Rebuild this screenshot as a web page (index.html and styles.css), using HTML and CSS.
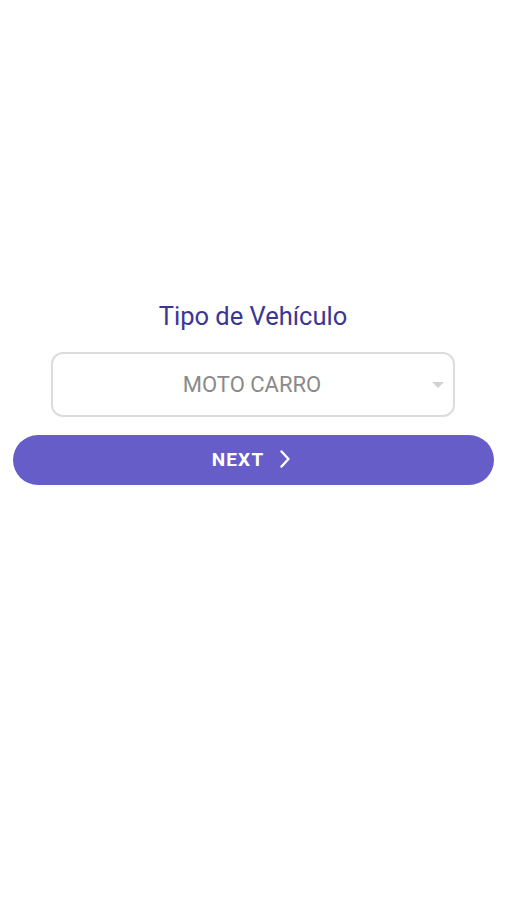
FILE: index.html
```html
<!DOCTYPE html>
<html lang="es">
<head>
<meta charset="utf-8">
<title>Tipo de Vehículo</title>
<link rel="stylesheet" href="styles.css">
</head>
<body>
<main class="page">
  <h1 class="title">Tipo de Vehículo</h1>
  <div class="select">
    <span class="select-value">MOTO CARRO</span>
    <span class="select-arrow"></span>
  </div>
  <button class="next" type="button">
    <span class="next-label">NEXT</span>
    <svg class="next-icon" width="14" height="22" viewBox="0 0 14 22" aria-hidden="true">
      <path d="M3.5 3.5 L10.5 11 L3.5 18.5" fill="none" stroke="#ffffff" stroke-width="2.4" stroke-linecap="round" stroke-linejoin="round"/>
    </svg>
  </button>
</main>
</body>
</html>
```
FILE: styles.css
```css
html, body {
  margin: 0;
  padding: 0;
  background: #ffffff;
}
body {
  font-family: Roboto, "Noto Sans", Arial, sans-serif;
  width: 506px;
  height: 900px;
}
.page {
  display: flex;
  flex-direction: column;
  align-items: center;
  padding-top: 300px;
}
.title {
  margin: 0;
  font-size: 25.5px;
  line-height: 32px;
  font-weight: 400;
  color: #3b3694;
}
.select {
  margin-top: 20px;
  box-sizing: border-box;
  width: 404px;
  height: 65px;
  border: 2px solid #dcdcdc;
  border-radius: 12px;
  display: flex;
  align-items: center;
  justify-content: center;
  position: relative;
}
.select-value {
  font-size: 22px;
  color: #8a8a8a;
  margin-left: -2px;
}
.select-arrow {
  position: absolute;
  right: 9px;
  top: 28px;
  width: 0;
  height: 0;
  border-left: 6px solid transparent;
  border-right: 6px solid transparent;
  border-top: 6px solid #d2d2d2;
}
.next {
  margin-top: 18px;
  width: 481px;
  height: 50px;
  border: none;
  border-radius: 25px;
  background: #675dc9;
  color: #ffffff;
  display: flex;
  align-items: center;
  justify-content: center;
  gap: 14px;
  padding: 0 2px 2px 0;
  font-family: Roboto, "Noto Sans", Arial, sans-serif;
  cursor: pointer;
}
.next-label {
  font-size: 19px;
  font-weight: 700;
  letter-spacing: 1.2px;
}
.next-icon {
  display: block;
}
```
